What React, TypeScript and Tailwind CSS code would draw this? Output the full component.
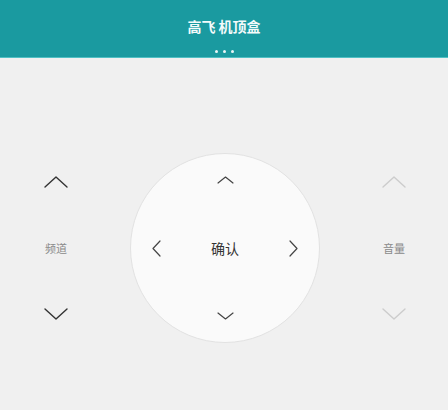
const font = { fontFamily: '"Noto Sans CJK SC", "Noto Sans", sans-serif' };

function Chevron({ dir, w, h, color, stroke = 1.4 }: { dir: 'up' | 'down' | 'left' | 'right'; w: number; h: number; color: string; stroke?: number }) {
  const vertical = dir === 'up' || dir === 'down';
  const W = vertical ? w : h;
  const H = vertical ? h : w;
  const p = 1;
  let d = '';
  if (dir === 'up') d = `M${p} ${H - p} L${W / 2} ${p} L${W - p} ${H - p}`;
  if (dir === 'down') d = `M${p} ${p} L${W / 2} ${H - p} L${W - p} ${p}`;
  if (dir === 'left') d = `M${W - p} ${p} L${p} ${H / 2} L${W - p} ${H - p}`;
  if (dir === 'right') d = `M${p} ${p} L${W - p} ${H / 2} L${p} ${H - p}`;
  return (
    <svg width={W} height={H} viewBox={`0 0 ${W} ${H}`} fill="none">
      <path d={d} stroke={color} strokeWidth={stroke} strokeLinecap="round" strokeLinejoin="round" />
    </svg>
  );
}

function SideControl({ label, color, labelColor }: { label: string; color: string; labelColor: string }) {
  return (
    <div className="flex h-[190px] flex-col items-center justify-between py-[23px]">
      <Chevron dir="up" w={24} h={12} color={color} />
      <span className="text-[11px] leading-none" style={{ color: labelColor }}>
        {label}
      </span>
      <Chevron dir="down" w={24} h={12} color={color} />
    </div>
  );
}

export default function App() {
  return (
    <div className="flex h-[410px] w-[448px] flex-col bg-[#f0f0f0]" style={font}>
      <header className="flex h-[58px] flex-col items-center border-b border-[#4fc0c4] bg-[#1a9aa0]">
        <h1 className="mt-[16px] text-[14px] font-semibold leading-[20px] text-[#f4fbfb]">高飞 机顶盒</h1>
        <div className="mt-[14px] flex gap-[5px]">
          <span className="h-[3px] w-[3px] rounded-full bg-white/90" />
          <span className="h-[3px] w-[3px] rounded-full bg-white/90" />
          <span className="h-[3px] w-[3px] rounded-full bg-white/90" />
        </div>
      </header>

      <main className="flex pt-[95px]">
        <div className="w-[112px]">
          <SideControl label="频道" color="#333333" labelColor="#8a8a8a" />
        </div>

        <div className="ml-[18px] flex h-[190px] w-[190px] flex-col items-center justify-between rounded-full border border-[#e2e2e2] bg-[#fafafa] py-[22px]">
          <Chevron dir="up" w={17} h={8} color="#444444" stroke={1.2} />
          <div className="flex w-full items-center justify-between px-[21px]">
            <Chevron dir="left" w={17} h={9} color="#444444" stroke={1.2} />
            <span className="text-[14px] leading-none text-[#333333]">确认</span>
            <Chevron dir="right" w={17} h={9} color="#444444" stroke={1.2} />
          </div>
          <Chevron dir="down" w={17} h={8} color="#444444" stroke={1.2} />
        </div>

        <div className="ml-[20px] w-[108px]">
          <SideControl label="音量" color="#cccccc" labelColor="#8a8a8a" />
        </div>
      </main>
    </div>
  );
}
